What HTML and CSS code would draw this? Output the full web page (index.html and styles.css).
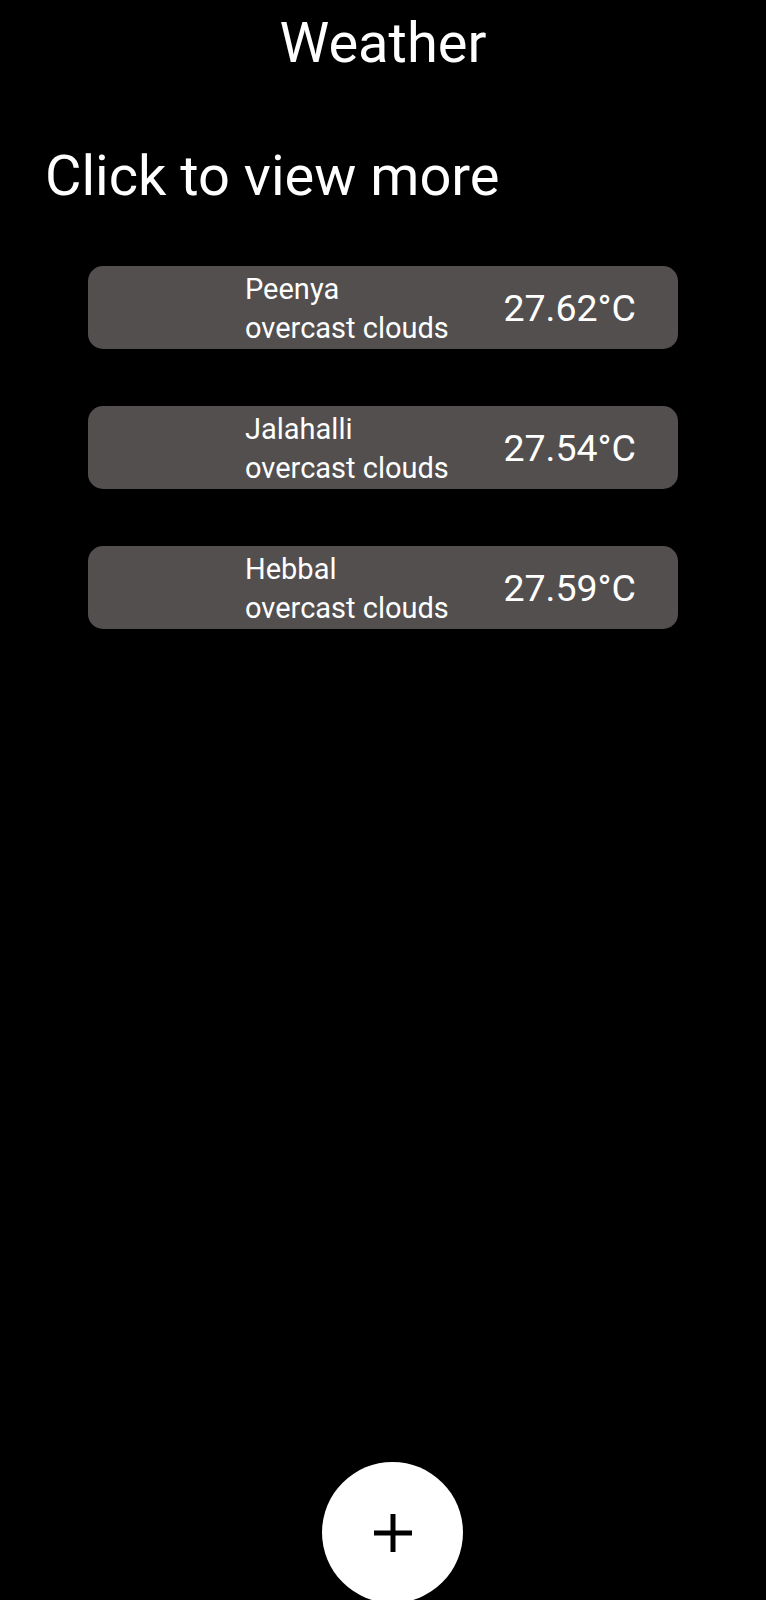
FILE: index.html
```html
<!DOCTYPE html>
<html lang="en">
<head>
<meta charset="utf-8">
<title>Weather</title>
<link rel="stylesheet" href="styles.css">
</head>
<body>
<main class="app">
  <h1 class="app-title">Weather</h1>
  <h2 class="subtitle">Click to view more</h2>
  <ul class="city-list">
    <li class="city-card">
      <div class="city-info">
        <div class="city-name">Peenya</div>
        <div class="city-desc">overcast clouds</div>
      </div>
      <div class="city-temp">27.62°C</div>
    </li>
    <li class="city-card">
      <div class="city-info">
        <div class="city-name">Jalahalli</div>
        <div class="city-desc">overcast clouds</div>
      </div>
      <div class="city-temp">27.54°C</div>
    </li>
    <li class="city-card">
      <div class="city-info">
        <div class="city-name">Hebbal</div>
        <div class="city-desc">overcast clouds</div>
      </div>
      <div class="city-temp">27.59°C</div>
    </li>
  </ul>
</main>
<button class="fab" aria-label="Add city">
  <svg width="38" height="38" viewBox="0 0 38 38" aria-hidden="true">
    <rect x="16.5" y="0" width="5" height="38" fill="#000"/>
    <rect x="0" y="16.5" width="38" height="5" fill="#000"/>
  </svg>
</button>
</body>
</html>
```

FILE: styles.css
```css
html, body {
  margin: 0;
  padding: 0;
  background: #000;
}

body {
  min-height: 1600px;
  font-family: Roboto, "Noto Sans", "Liberation Sans", sans-serif;
  color: #fff;
}

.app {
  display: flex;
  flex-direction: column;
}

.app-title {
  margin: 0;
  padding-top: 11px;
  font-size: 56px;
  font-weight: 400;
  line-height: 64px;
  text-align: center;
}

.subtitle {
  margin: 69px 0 0 45px;
  font-size: 56px;
  font-weight: 400;
  line-height: 64px;
}

.city-list {
  list-style: none;
  margin: 58px 0 0 88px;
  padding: 0;
  width: 590px;
  display: flex;
  flex-direction: column;
  gap: 57px;
}

.city-card {
  height: 83px;
  box-sizing: border-box;
  background: #524f4e;
  border-radius: 15px;
  display: flex;
  align-items: center;
  justify-content: space-between;
  padding: 0 42px 0 157px;
}

.city-info {
  display: flex;
  flex-direction: column;
  font-size: 29px;
  line-height: 39px;
  padding-top: 3px;
}

.city-temp {
  font-size: 37.5px;
  line-height: 44px;
}

.fab {
  position: fixed;
  left: 322px;
  top: 1462px;
  width: 141px;
  height: 141px;
  border-radius: 50%;
  border: none;
  background: #fff;
  padding: 0;
  display: flex;
  align-items: center;
  justify-content: center;
}
```
